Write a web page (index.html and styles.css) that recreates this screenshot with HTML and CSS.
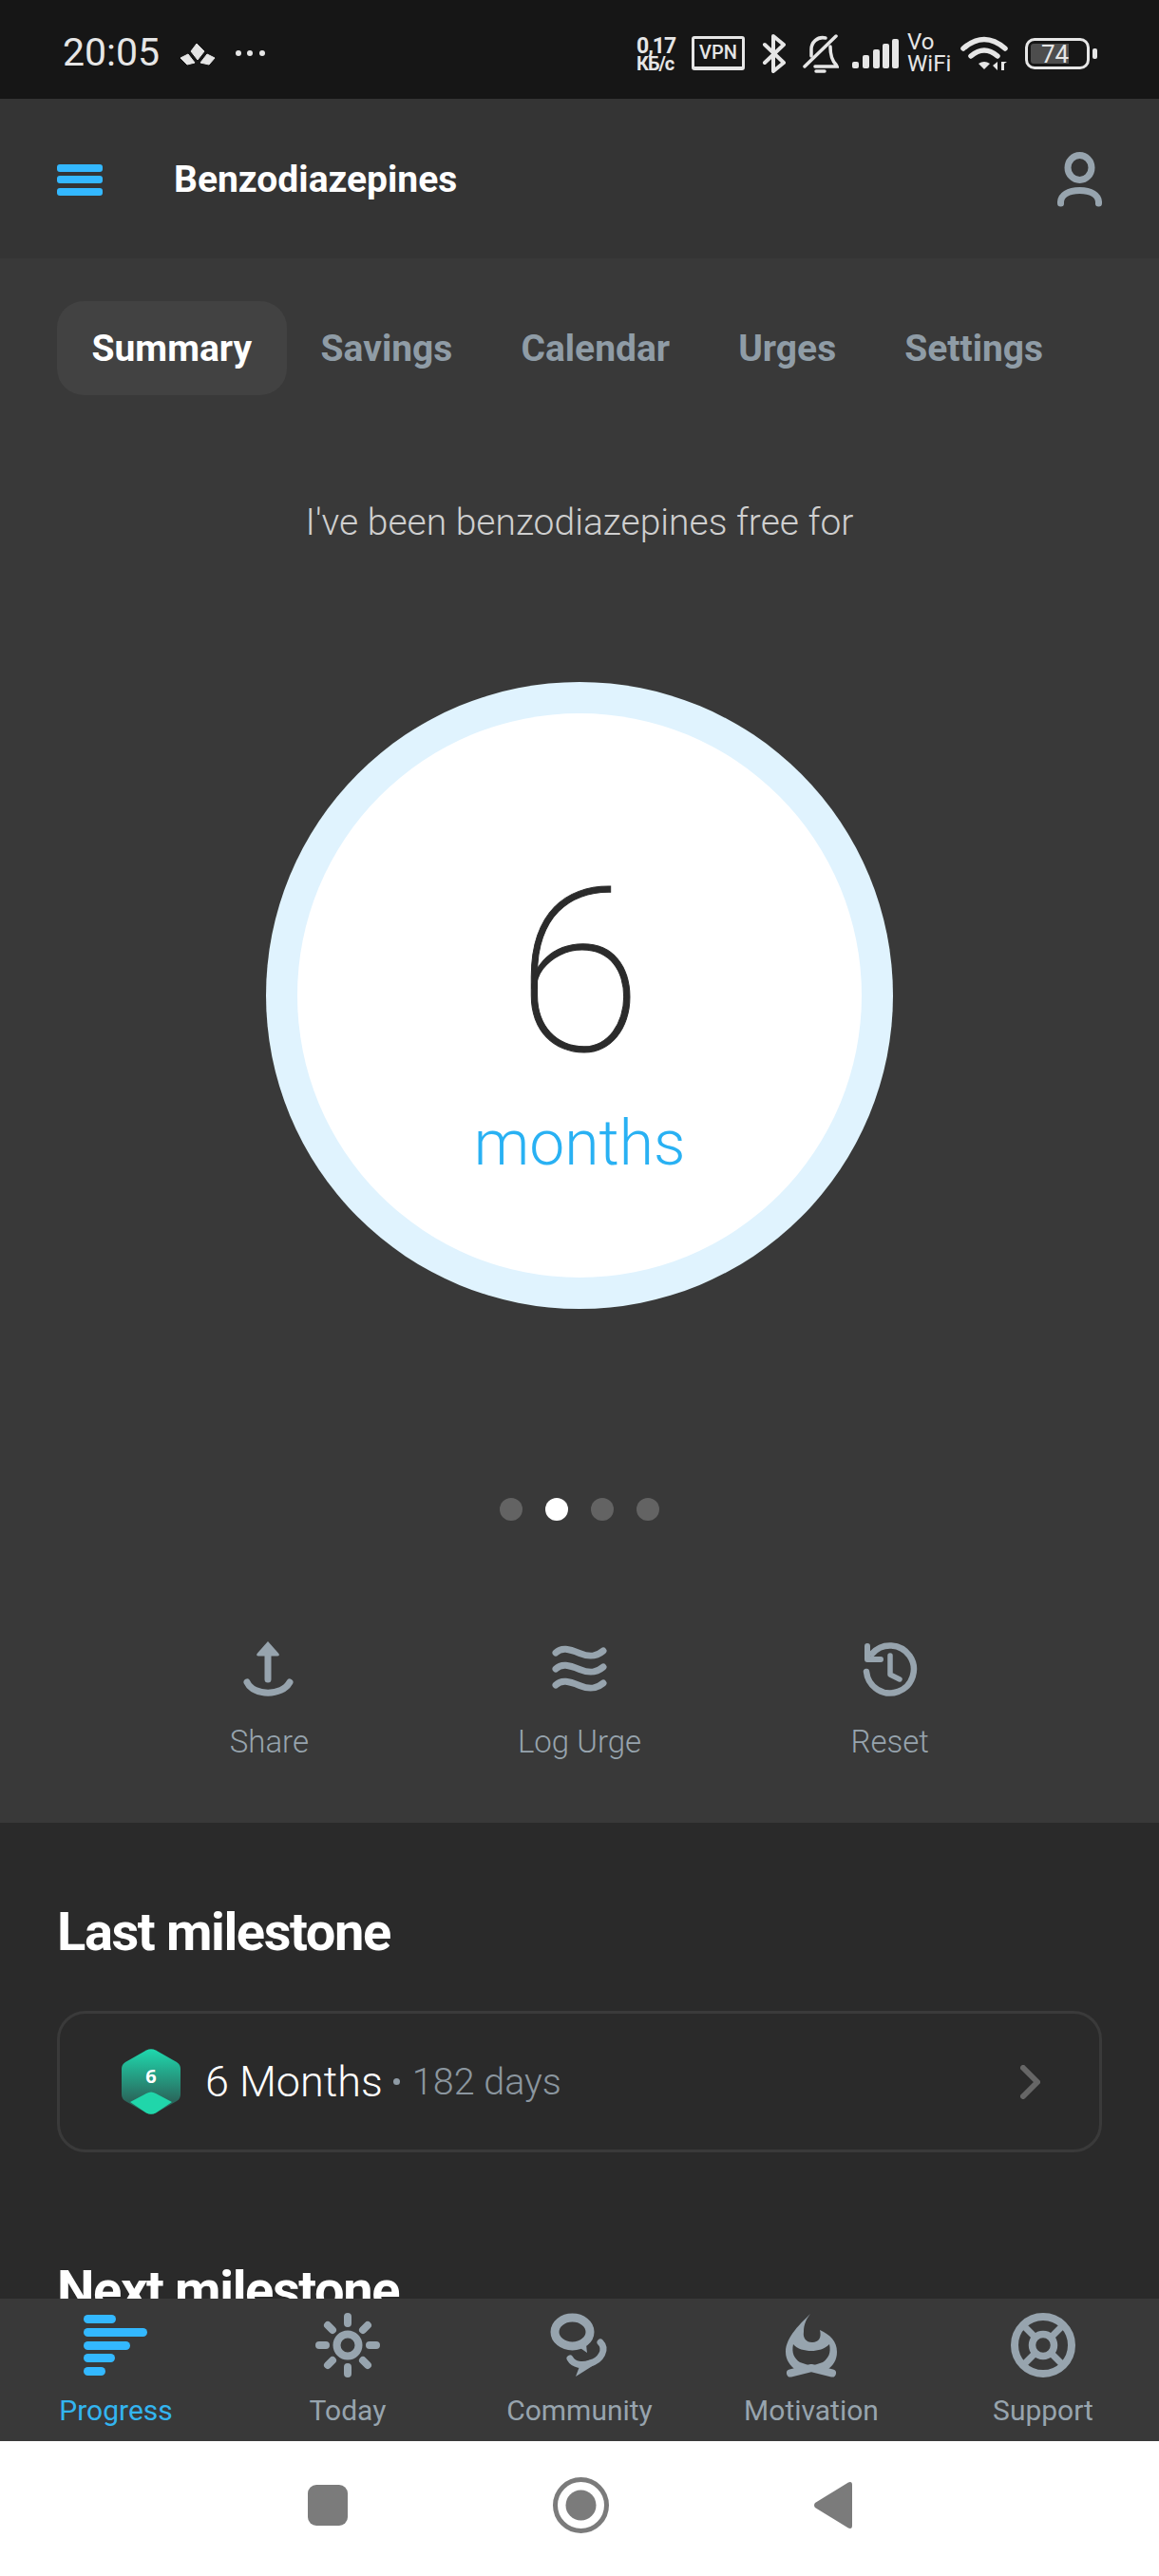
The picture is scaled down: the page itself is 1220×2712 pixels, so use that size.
FILE: index.html
```html
<!DOCTYPE html>
<html>
<head>
  <meta name="viewport" content="width=device-width, initial-scale=1.0">
  <link rel="stylesheet" href="styles.css">
</head>
<body>
<div class="phone">

  <div class="status-bar">
    <span class="clock">20:05</span>
    <svg class="notif-icon" width="38" height="24" viewBox="0 0 38 24" fill="#e6e6e6" stroke="#e6e6e6" stroke-width="1" stroke-linejoin="round">
      <path d="M18 1 L26 9 L19 18 L12 9 Z"/>
      <path d="M1 16 L9 12 L16 21 L8 23 Z"/>
      <path d="M29 12 L37 16 L31 23 L22 21 Z"/>
    </svg>
    <svg class="more-icon" width="31" height="6" viewBox="0 0 31 6" fill="#e6e6e6">
      <circle cx="3" cy="3" r="3"/><circle cx="15" cy="3" r="3"/><circle cx="28" cy="3" r="3"/>
    </svg>

    <div class="status-right">
      <div class="speed"><span>0,17</span><span class="speed-unit">КБ/с</span></div>
      <div class="vpn">VPN</div>
      <svg class="bt" width="26" height="41" viewBox="0 0 26 41" fill="none" stroke="#e6e6e6" stroke-width="4" stroke-linejoin="round" stroke-linecap="round">
        <path d="M3 11 L23 30 L12 39 V2 L23 11 L3 30"/>
      </svg>
      <svg class="bell" width="38" height="41" viewBox="0 0 38 41" fill="none" stroke="#e6e6e6" stroke-width="3.5" stroke-linecap="round">
        <path d="M2 34 L35 2"/>
        <path d="M24 4 C15 2 9 9 9 16 L9 23"/>
        <path d="M29 13 C29 22 31 28 35 32 L36 34 H13"/>
        <path d="M14 39 H23" stroke-width="3.5"/>
      </svg>
      <svg class="signal" width="49" height="31" viewBox="0 0 49 31" fill="#e6e6e6">
        <rect x="0" y="24" width="7" height="7" rx="2"/>
        <rect x="11" y="17" width="7" height="14" rx="2"/>
        <rect x="22" y="11" width="7" height="20" rx="2"/>
        <rect x="32" y="5" width="7" height="26" rx="2"/>
        <rect x="42" y="0" width="7" height="31" rx="2"/>
      </svg>
      <div class="vowifi"><span>Vo</span><span>WiFi</span></div>
      <svg class="wifi" width="50" height="36" viewBox="0 0 50 36" fill="none" stroke="#e6e6e6" stroke-width="5.500" stroke-linecap="round">
        <path d="M3 13 Q25 -6 47 13"/>
        <path d="M11 21 Q25 9 39 21"/>
        <path d="M19 29 Q25 25 31 29 L25 35 Z" fill="#e6e6e6" stroke="none"/>
        <path d="M39 27 V36 L34 31 Z M43 36 V27 H49 L46 29 V36 Z" fill="#e6e6e6" stroke="none"/>
      </svg>
      <div class="battery">
        <div class="battery-body">
          <div class="battery-level"></div>
          <span class="battery-text">74</span>
        </div>
        <div class="battery-nub"></div>
      </div>
    </div>
  </div>

  <div class="content">
    <div class="app-bar">
      <div class="menu-btn"><span></span><span></span><span></span></div>
      <div class="app-title">Benzodiazepines</div>
      <svg class="user-icon" width="47" height="58" viewBox="0 0 47 58" fill="none" stroke="#97a4ae" stroke-width="7" stroke-linecap="round">
        <ellipse cx="23.500" cy="16.500" rx="12.500" ry="13"/>
        <path d="M3.500 54 C3 45 12 40.500 23.500 40.500 C35 40.500 44 45 43.500 54"/>
      </svg>
    </div>

    <div class="summary">
      <div class="tabs">
        <div class="tab active">Summary</div>
        <div class="tab">Savings</div>
        <div class="tab">Calendar</div>
        <div class="tab">Urges</div>
        <div class="tab">Settings</div>
      </div>

      <p class="free-for">I've been benzodiazepines free for</p>

      <div class="ring">
        <div class="ring-inner">
          <div class="ring-num">6</div>
          <div class="ring-unit">months</div>
        </div>
      </div>

      <div class="dots">
        <span class="dot"></span>
        <span class="dot on"></span>
        <span class="dot"></span>
        <span class="dot"></span>
      </div>

      <div class="actions">
        <div class="action">
          <svg width="56" height="60" viewBox="0 0 56 60" fill="none" stroke="#97a4ae" stroke-width="7" stroke-linecap="round">
            <path d="M27 12 V41"/>
            <path d="M27 1 L38.500 14 Q39.500 16.500 37 16.500 H17 Q14.500 16.500 15.500 14 Z" fill="#97a4ae" stroke="none"/>
            <path d="M5 44 C12 59 42 59 50 44"/>
          </svg>
          <span class="action-label">Share</span>
        </div>
        <div class="action">
          <svg width="58" height="60" viewBox="0 0 58 60" fill="none" stroke="#97a4ae" stroke-width="7" stroke-linecap="round">
            <path d="M4 13 C10 7 18 9 29 13.500 C40 18 47 17 54 11"/>
            <path d="M4 30 C10 24 18 26 29 30.500 C40 35 47 34 54 28"/>
            <path d="M4 47 C10 41 18 43 29 47.500 C40 52 47 51 54 45"/>
          </svg>
          <span class="action-label">Log Urge</span>
        </div>
        <div class="action">
          <svg width="60" height="60" viewBox="0 0 60 60" fill="none" stroke="#97a4ae" stroke-width="6.500" stroke-linecap="round" stroke-linejoin="round">
            <path d="M11 14 A25 25 0 1 1 5 33"/>
            <path d="M6 6 V20 H20" stroke-width="6"/>
            <path d="M30 16 V36 L40 41" stroke-width="5.500"/>
          </svg>
          <span class="action-label">Reset</span>
        </div>
      </div>
    </div>

    <div class="lower">
      <h2 class="section-title">Last milestone</h2>
      <div class="milestone-card">
        <svg class="badge" width="62" height="69" viewBox="0 0 62 69">
          <defs>
            <linearGradient id="badgeGrad" x1="0" y1="0" x2="0" y2="1">
              <stop offset="0" stop-color="#1fd9ae"/>
              <stop offset="0.8" stop-color="#2a665b"/>
            </linearGradient>
          </defs>
          <path d="M26 1.500 Q31 -1 36 1.500 L58 14 Q62 16.500 62 21 V48 Q62 52.500 58 55 L36 67.500 Q31 70 26 67.500 L4 55 Q0 52.500 0 48 V21 Q0 16.500 4 14 Z" fill="url(#badgeGrad)"/>
          <path d="M26 47 Q31 44 36 47 L53 56 L36 67.500 Q31 70 26 67.500 L9 56 Z" fill="#20d6aa"/>
          <text class="badge-num" x="31" y="36" text-anchor="middle">6</text>
        </svg>
        <span class="milestone-name">6 Months</span>
        <span class="milestone-sep"></span>
        <span class="milestone-days">182 days</span>
        <svg class="chevron" width="21" height="36" viewBox="0 0 21 36" fill="none" stroke="#666" stroke-width="6" stroke-linecap="round" stroke-linejoin="round">
          <path d="M3 3 L18 18 L3 33"/>
        </svg>
      </div>
      <h2 class="section-title next">Next milestone</h2>
    </div>
  </div>

  <div class="tab-bar">
    <div class="nav-item active">
      <svg width="68" height="68" viewBox="0 0 68 68" fill="#33b8ff">
        <rect x="0" y="2" width="34" height="9" rx="4.500"/>
        <rect x="0" y="16" width="67" height="9" rx="4.500"/>
        <rect x="0" y="30" width="49" height="9" rx="4.500"/>
        <rect x="0" y="43" width="33" height="9" rx="4.500"/>
        <rect x="0" y="57" width="23" height="9" rx="4.500"/>
      </svg>
      <span>Progress</span>
    </div>
    <div class="nav-item">
      <svg width="68" height="68" viewBox="0 0 68 68" fill="none" stroke="#97a4ae" stroke-width="8" stroke-linecap="round">
        <circle cx="34" cy="34" r="11.500"/>
        <path d="M34 4 V11 M34 57 V64 M4 34 H11 M57 34 H64"/>
        <path d="M13 13 L18 18 M55 13 L50 18 M13 55 L18 50 M55 55 L50 50"/>
      </svg>
      <span>Today</span>
    </div>
    <div class="nav-item">
      <svg width="63" height="68" viewBox="0 0 63 68" fill="none" stroke="#97a4ae" stroke-linecap="round">
        <ellipse cx="23.500" cy="20" rx="18.500" ry="15" stroke-width="9"/>
        <path d="M26 33 L39 42 L37 25 Z" fill="#97a4ae" stroke="none"/>
        <path d="M21 48 C25 55 34 56 42 53 C54 50 60 38 53 31" stroke-width="7"/>
        <path d="M27 67 L33 51 L46 55 Z" fill="#97a4ae" stroke="none"/>
      </svg>
      <span>Community</span>
    </div>
    <div class="nav-item">
      <svg width="54" height="68" viewBox="0 0 54 68" fill="#97a4ae">
        <path fill-rule="evenodd" d="M26 1 C17 10 0 25 0 41 C0 50 5 55 10 60 L44 60 C50 55 54 50 54 41 C54 30 47 23 36 18 C38 26 35 31 28 31 C21 31 18 26 19 20 C19 12 22 6 26 1 Z M8 33 C12 38 20 40 27 40 C34 40 41 38 46 33 C48 42 45 48 39 52 L27 56 L15 52 C9 48 6 42 8 33 Z"/>
        <path d="M5 63.500 L27 58 L49 63.500" fill="none" stroke="#97a4ae" stroke-width="8" stroke-linecap="round" stroke-linejoin="round"/>
      </svg>
      <span>Motivation</span>
    </div>
    <div class="nav-item">
      <svg width="68" height="68" viewBox="0 0 68 68" fill="none" stroke="#97a4ae">
        <circle cx="34" cy="34" r="30" stroke-width="8"/>
        <circle cx="34" cy="34" r="11.500" stroke-width="7.500"/>
        <path d="M13 13 L25 25 M55 13 L43 25 M13 55 L25 43 M55 55 L43 43" stroke-width="7"/>
      </svg>
      <span>Support</span>
    </div>
  </div>

  <div class="sys-nav">
    <div class="sys-square"></div>
    <svg width="59" height="59" viewBox="0 0 59 59">
      <circle cx="29.500" cy="29.500" r="27" fill="none" stroke="#7b7b7b" stroke-width="5"/>
      <circle cx="29.500" cy="29.500" r="16" fill="#7b7b7b"/>
    </svg>
    <svg width="40" height="49" viewBox="0 0 40 49" fill="#7b7b7b">
      <path d="M36 0.500 Q40 -1 40 3 V46 Q40 50 36 48.500 L1 27 Q-1 24.500 1 22 Z"/>
    </svg>
  </div>

</div>
</body>
</html>
```
FILE: styles.css
```css
html, body {
  margin: 0;
  padding: 0;
}

body {
  font-family: 'Roboto', sans-serif;
  background: #fff;
}

.phone {
  width: 1220px;
  height: 2712px;
  display: flex;
  flex-direction: column;
  overflow: hidden;
}

/* Android status bar */
.status-bar {
  flex: 0 0 104px;
  display: flex;
  align-items: center;
  padding: 0 65px 0 66px;
  background: #161616;
  color: #e6e6e6;
}

.clock {
  font-size: 41px;
  line-height: 40px;
  margin-top: 6px;
}

.notif-icon {
  margin-left: 21px;
  margin-top: 9px;
}

.more-icon {
  margin-left: 21px;
  margin-top: 8px;
}

.status-right {
  margin-left: auto;
  display: flex;
  align-items: center;
  height: 44px;
  margin-top: 8px;
}

.speed {
  width: 45px;
  display: flex;
  flex-direction: column;
  font-size: 23px;
  line-height: 21px;
  font-weight: 700;
  letter-spacing: -1px;
}

.speed-unit {
  font-size: 20px;
  line-height: 16px;
}

.vpn {
  margin-left: 13px;
  width: 56px;
  height: 36px;
  box-sizing: border-box;
  border: 3px solid #e6e6e6;
  border-bottom-width: 4px;
  border-radius: 3px;
  font-size: 20px;
  line-height: 28px;
  font-weight: 500;
  text-align: center;
}

.bt { margin-left: 18px; }
.bell { margin-left: 17px; }
.signal { margin-left: 14px; }
.wifi { margin-left: 10px; }

.vowifi {
  margin-left: 9px;
  width: 46px;
  display: flex;
  flex-direction: column;
  font-size: 24px;
  line-height: 23px;
}

.battery {
  margin-left: 18px;
  display: flex;
  align-items: center;
  gap: 3px;
}

.battery-body {
  position: relative;
  width: 68px;
  height: 33px;
  box-sizing: border-box;
  border: 3px solid #e6e6e6;
  border-radius: 10px;
}

.battery-level {
  position: absolute;
  left: 3px;
  top: 3px;
  width: 40px;
  height: 21px;
  background: #4d4d4d;
  border-radius: 3px 0 0 3px;
}

.battery-text {
  position: absolute;
  left: 14px;
  top: 0;
  font-size: 26px;
  line-height: 28px;
}

.battery-nub {
  width: 5px;
  height: 11px;
  border-radius: 2px;
  background: #e6e6e6;
}

/* Scrolling part, cut off by the tab bar */
.content {
  flex: 1;
  min-height: 0;
  overflow: hidden;
  background: #2a2a2a;
}

.app-bar {
  height: 168px;
  display: flex;
  align-items: center;
  padding: 2px 60px 0 60px;
  box-sizing: border-box;
  background: #343434;
}

.menu-btn {
  width: 48px;
  display: flex;
  flex-direction: column;
  gap: 4.5px;
}

.menu-btn span {
  height: 8px;
  border-radius: 3px;
  background: #33b8ff;
}

.app-title {
  margin-left: 75px;
  font-size: 39px;
  font-weight: 700;
  color: #fff;
}

.user-icon {
  margin-left: auto;
}

.summary {
  background: #393939;
  padding: 45px 0 65px;
}

.tabs {
  display: flex;
  padding-left: 60px;
}

.tab {
  height: 99px;
  line-height: 101px;
  padding: 0 36px;
  border-radius: 28px;
  font-size: 39px;
  font-weight: 700;
  color: #8f9ca6;
}

.tab.active {
  padding: 0 36.5px;
  background: #424242;
  color: #fff;
}

.free-for {
  margin: 109px 0 0;
  text-align: center;
  font-size: 39px;
  line-height: 50px;
  font-weight: 300;
  color: #cfcfcf;
}

.ring {
  width: 660px;
  height: 660px;
  margin: 143px auto 0;
  padding: 33px;
  box-sizing: border-box;
  border-radius: 50%;
  background: #e0f3fe;
}

.ring-inner {
  height: 100%;
  border-radius: 50%;
  background: #fff;
  display: flex;
  flex-direction: column;
  align-items: center;
}

.ring-num {
  margin-top: 183px;
  font-size: 240px;
  line-height: 180px;
  font-weight: 100;
  -webkit-text-stroke: 1px #2b2b2b;
  color: #2b2b2b;
}

.ring-unit {
  margin-top: 50px;
  font-size: 66px;
  line-height: 80px;
  font-weight: 300;
  color: #29b1f3;
}

.dots {
  display: flex;
  justify-content: center;
  gap: 24px;
  margin-top: 199px;
}

.dot {
  width: 24px;
  height: 24px;
  border-radius: 50%;
  background: #636363;
}

.dot.on {
  background: #fff;
}

.actions {
  display: flex;
  padding: 0 120px;
  margin-top: 126px;
}

.action {
  flex: 1;
  display: flex;
  flex-direction: column;
  align-items: center;
}

.action-label {
  margin-top: 27px;
  font-size: 33px;
  line-height: 40px;
  font-weight: 300;
  color: #97a4ae;
}

.lower {
  padding: 85px 60px 0;
}

.section-title {
  margin: 0;
  font-size: 56px;
  line-height: 60px;
  font-weight: 700;
  letter-spacing: -1.4px;
  color: #fff;
}

.section-title.next {
  margin-top: 115px;
}

.milestone-card {
  margin-top: 53px;
  height: 149px;
  box-sizing: border-box;
  display: flex;
  align-items: center;
  padding: 0 62px 0 65px;
  border: 3px solid #3a3a3a;
  border-radius: 30px;
}

.badge-num {
  font-family: 'Open Sans', sans-serif;
  font-size: 20px;
  font-weight: 700;
  fill: #fff;
}

.milestone-name {
  margin-left: 26px;
  font-size: 45px;
  font-weight: 300;
  color: #fff;
}

.milestone-sep {
  width: 7px;
  height: 7px;
  margin-left: 11px;
  border-radius: 50%;
  background: #8f9ba5;
}

.milestone-days {
  margin-left: 13px;
  font-size: 39.5px;
  font-weight: 300;
  color: #8b969f;
}

.chevron {
  margin-left: auto;
}

/* Bottom tabs */
.tab-bar {
  flex: 0 0 150px;
  display: flex;
  box-sizing: border-box;
  padding-top: 15px;
  background: #393939;
}

.nav-item {
  flex: 1;
  display: flex;
  flex-direction: column;
  align-items: center;
  font-size: 30px;
  line-height: 36px;
  color: #97a4ae;
}

.nav-item span {
  margin-top: 17px;
}

.nav-item.active {
  color: #33b5f0;
}

/* Android nav buttons */
.sys-nav {
  flex: 0 0 142px;
  box-sizing: border-box;
  padding-bottom: 8px;
  display: flex;
  justify-content: center;
  align-items: center;
  gap: 216px;
  background: #fff;
}

.sys-square {
  width: 42px;
  height: 43px;
  border-radius: 9px;
  background: #7b7b7b;
}
```
